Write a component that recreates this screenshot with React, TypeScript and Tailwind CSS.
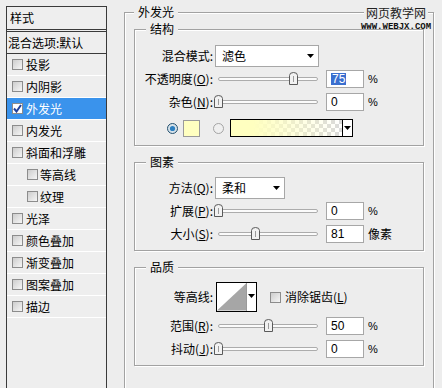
import React from "react";

type Item = { name: string; on?: boolean; sub?: boolean };

const items: Item[] = [
  { name: "投影" },
  { name: "内阴影" },
  { name: "外发光", on: true },
  { name: "内发光" },
  { name: "斜面和浮雕" },
  { name: "等高线", sub: true },
  { name: "纹理", sub: true },
  { name: "光泽" },
  { name: "颜色叠加" },
  { name: "渐变叠加" },
  { name: "图案叠加" },
  { name: "描边" },
];

function Check({ on }: { on?: boolean }) {
  return (
    <span
      className={`flex h-[11px] w-[11px] shrink-0 items-center justify-center border border-[#8c8c8c] ${
        on ? "bg-white" : "bg-linear-to-br from-[#cdcdcd] to-[#f6f6f6]"
      }`}
    >
      {on && (
        <svg width="9" height="9" viewBox="0 0 9 9">
          <path d="M1 4.5 L3.5 7.5 L8 1" fill="none" stroke="#21409a" strokeWidth="2" />
        </svg>
      )}
    </span>
  );
}

function Radio({ on }: { on?: boolean }) {
  return (
    <svg width="11" height="11" viewBox="0 0 11 11" className="shrink-0">
      <circle cx="5.5" cy="5.5" r="5" fill={on ? "#d6e2ea" : "#efefef"} stroke={on ? "#24506e" : "#a3a3a3"} />
      {on && <circle cx="5.5" cy="5.5" r="2.6" fill="#2d7fc0" />}
    </svg>
  );
}

function Arrow() {
  return (
    <svg width="7" height="4" viewBox="0 0 7 4">
      <path d="M0 0 H7 L3.5 4 Z" fill="#000" />
    </svg>
  );
}

function Slider({ pos }: { pos: number }) {
  return (
    <div className="relative ml-[5px] h-[14px] w-[100px] shrink-0">
      <div className="absolute left-0 right-0 top-[5px] h-[4px] rounded-full border border-[#acacac] bg-[#fbfbfb]" />
      <svg className="absolute top-0" style={{ left: pos - 4 }} width="9" height="13" viewBox="0 0 9 13">
        <path d="M0.5 12.5 V3.5 Q0.5 0.5 4.5 0.5 Q8.5 0.5 8.5 3.5 V12.5 Z" fill="#f2f2f2" stroke="#5a5a5a" />
        <path d="M4.5 4 V10" stroke="#9c9c9c" />
      </svg>
    </div>
  );
}

function NumBox({ v, sel }: { v: string; sel?: boolean }) {
  return (
    <div className="ml-[8px] flex h-[18px] w-[38px] shrink-0 items-center border border-[#a7a7a7] bg-white pl-[4px] font-['Liberation_Sans',sans-serif] text-[12px] leading-none">
      <span className={sel ? "bg-[#3a6fcf] px-[1px] text-white" : ""}>{v}</span>
    </div>
  );
}

function SliderRow({
  label,
  pos,
  v,
  unit = "%",
  sel,
  className = "",
}: {
  label: React.ReactNode;
  pos: number;
  v: string;
  unit?: string;
  sel?: boolean;
  className?: string;
}) {
  return (
    <div className={`flex h-[18px] items-center ${className}`}>
      <div className="w-[78px] shrink-0 text-right">{label}</div>
      <Slider pos={pos} />
      <NumBox v={v} sel={sel} />
      <span className={`ml-[4px] ${unit === "%" ? "font-['Liberation_Sans',sans-serif] text-[11px]" : ""}`}>{unit}</span>
    </div>
  );
}

function Group({ title, className = "", children }: { title: string; className?: string; children: React.ReactNode }) {
  return (
    <fieldset
      className={`w-[290px] border border-[#a2a2a2] shadow-[inset_1px_1px_0_#fff,1px_1px_0_#fff] ${className}`}
    >
      <legend className="ml-[11px] bg-[#ededed] px-[4px] leading-[16px]">{title}</legend>
      {children}
    </fieldset>
  );
}

export default function App() {
  return (
    <div className="relative flex h-[388px] w-[442px] overflow-hidden bg-[#ededed] font-['Noto_Sans_CJK_SC',sans-serif] text-[12px] leading-[16px] text-black">
      {/* styles list */}
      <div className="ml-[6px] mt-[6px] h-[400px] w-[101px] shrink-0 border-x border-t border-[#3a3a3a] bg-[#eeeeee]">
        <div className="flex h-[23px] items-center border-b border-[#3a3a3a] pl-[3px]">样式</div>
        <div className="mt-[1px] flex h-[23px] items-center border-y border-[#3a3a3a] pl-[1px]">混合选项:默认</div>
        {items.map((it) => (
          <div
            key={it.name}
            className={`flex h-[22px] items-center border-b border-white ${it.sub ? "pl-[20px]" : "pl-[5px]"} ${
              it.on ? "bg-[#3a93ec] text-white" : ""
            }`}
          >
            <Check on={it.on} />
            <span className={it.sub ? "ml-[2px]" : "ml-[3px]"}>{it.name}</span>
          </div>
        ))}
      </div>

      {/* outer glow settings */}
      <fieldset className="ml-[17px] mt-[4px] h-[420px] w-[310px] shrink-0 border border-[#a2a2a2] shadow-[inset_1px_1px_0_#fff,1px_1px_0_#fff]">
        <legend className="ml-[9px] bg-[#ededed] px-[4px] leading-[16px]">外发光</legend>
        <div className="pl-[9px] pt-[1px]">
          <Group title="结构" className="pb-[8px]">
            <div className="mt-[8px] flex h-[22px] items-center">
              <div className="w-[78px] shrink-0 text-right">混合模式:</div>
              <div className="ml-[2px] flex h-[22px] w-[104px] items-center justify-between border border-[#a7a7a7] bg-white pl-[6px] pr-[4px]">
                <span>滤色</span>
                <Arrow />
              </div>
            </div>
            <SliderRow
              className="mt-[3px]"
              label={
                <>
                  不透明度(<u>O</u>):
                </>
              }
              pos={75}
              v="75"
              sel
            />
            <SliderRow
              className="mt-[5px]"
              label={
                <>
                  杂色(<u>N</u>):
                </>
              }
              pos={0}
              v="0"
            />
            <div className="mt-[8px] flex h-[18px] items-center">
              <span className="ml-[32px] flex">
                <Radio on />
              </span>
              <div className="ml-[5px] h-[17px] w-[17px] border border-[#9a9a9a] bg-[#ffffc0]" />
              <span className="ml-[13px] flex">
                <Radio />
              </span>
              <div className="ml-[6px] flex h-[18px] w-[123px] border border-black">
                <div className="flex-1 bg-[image:linear-gradient(to_right,#ffffc0_20%,rgba(255,255,192,0)),repeating-conic-gradient(#dadada_0_25%,#ffffff_0_50%)] bg-[length:100%_100%,8px_8px]" />
                <div className="flex w-[10px] items-center justify-center border-l border-black bg-white">
                  <Arrow />
                </div>
              </div>
            </div>
          </Group>

          <Group title="图素" className="mt-[8px] pb-[7px]">
            <div className="mt-[7px] flex h-[22px] items-center">
              <div className="w-[78px] shrink-0 text-right">
                方法(<u>Q</u>):
              </div>
              <div className="ml-[2px] flex h-[22px] w-[70px] items-center justify-between border border-[#a7a7a7] bg-white pl-[6px] pr-[4px]">
                <span>柔和</span>
                <Arrow />
              </div>
            </div>
            <SliderRow
              className="mt-[3px]"
              label={
                <>
                  扩展(<u>P</u>):
                </>
              }
              pos={0}
              v="0"
            />
            <SliderRow
              className="mt-[5px]"
              label={
                <>
                  大小(<u>S</u>):
                </>
              }
              pos={37}
              v="81"
              unit="像素"
            />
          </Group>

          <Group title="品质" className="mt-[8px] pb-[7px]">
            <div className="mt-[7px] flex h-[30px] items-center">
              <div className="w-[78px] shrink-0 text-right">等高线:</div>
              <div className="ml-[3px] flex h-[30px] border border-black bg-white">
                <svg width="30" height="28" viewBox="0 0 30 28" className="border-r border-[#9a9a9a]">
                  <path d="M0 28 L30 0 V28 Z" fill="#a6a6a6" />
                </svg>
                <div className="flex w-[9px] justify-center pt-[11px]">
                  <Arrow />
                </div>
              </div>
              <span className="ml-[13px] flex">
                <Check />
              </span>
              <span className="ml-[4px]">
                消除锯齿(<u>L</u>)
              </span>
            </div>
            <SliderRow
              className="mt-[5px]"
              label={
                <>
                  范围(<u>R</u>):
                </>
              }
              pos={50}
              v="50"
            />
            <SliderRow
              className="mt-[5px]"
              label={
                <>
                  抖动(<u>J</u>):
                </>
              }
              pos={0}
              v="0"
            />
          </Group>
        </div>
      </fieldset>

      {/* watermark */}
      <div className="absolute left-[358px] top-[4px] flex w-[76px] flex-col items-center">
        <span className="bg-[#ededed] px-[2px] text-[12px] leading-[17px] tracking-[0px] text-[#222]">网页教学网</span>
        <span className="mt-[1px] font-['Liberation_Mono',monospace] text-[9px] font-bold leading-[10px] text-[#111]">
          WWW.WEBJX.COM
        </span>
      </div>
    </div>
  );
}
